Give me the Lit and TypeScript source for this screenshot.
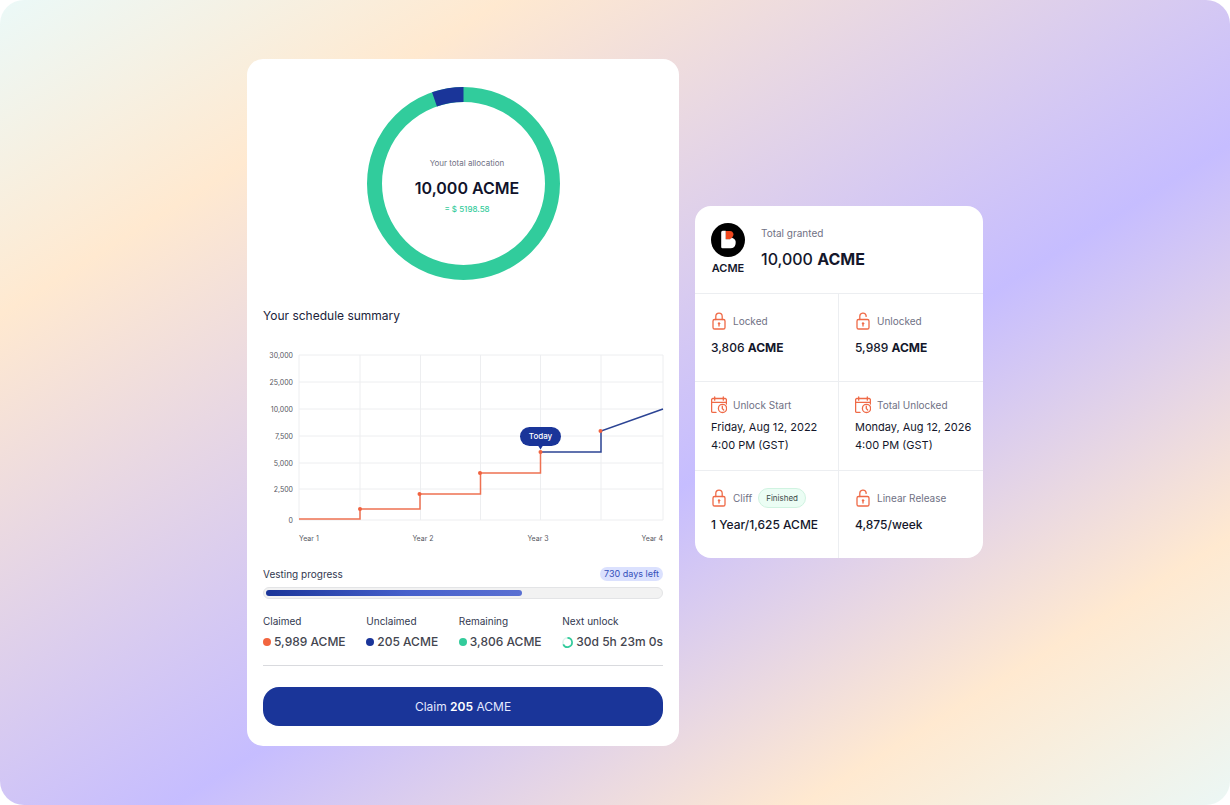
import { LitElement, html, svg, css } from "lit";
import { customElement, property } from "lit/decorators.js";

type Point = [number, number];

const lockBody = svg`<rect x="2" y="7.5" width="12" height="9.5" rx="1.6"/><circle cx="8" cy="11.4" r=".9" fill="currentColor" stroke-width=".5"/><path d="M8 11.5v2.600"/>`;

const icons: Record<string, unknown> = {
  locked: svg`${lockBody}<path d="M4.800 7.500V4.400a3.200 3.200 0 0 1 6.400 0v3.100"/>`,
  unlocked: svg`${lockBody}<path d="M4.800 7.500V4.400a3.200 3.200 0 0 1 6.300-.9v.9"/>`,
  calendar: svg`<path d="M5 16.400H1.800A1.200 1.200 0 0 1 .6 15.200V3.700a1.200 1.200 0 0 1 1.200-1.200h12.400a1.200 1.200 0 0 1 1.200 1.200v4.300M.6 6.300h14.800M3.700 1v3.200M12.300 1v3.200"/><circle cx="11.500" cy="12.400" r="4.100"/><path d="M11.300 10.200v2.400l1.400 1.400"/>`,
};

@customElement("line-icon")
class LineIcon extends LitElement {
  @property() name = "locked";

  static styles = css`
    :host { display: block; flex: none; color: #ef6a47; }
    .icon { display: block; width: 16px; height: 18px; }
  `;

  render() {
    return html`<svg class="icon" viewBox="0 0 16 18" fill="none" stroke="currentColor" stroke-width="1.3" stroke-linecap="round" stroke-linejoin="round" aria-hidden="true">${icons[this.name]}</svg>`;
  }
}

@customElement("allocation-ring")
class AllocationRing extends LitElement {
  @property({ type: Number }) share = 5.3;

  static styles = css`
    :host { display: grid; justify-items: center; align-items: center; }
    .ring, .text { grid-area: 1 / 1; }
    .ring { display: block; width: 193px; height: 193px; }
    .text { padding: 5px 0 0 8px; text-align: center; }
    .caption { margin: 0; font-size: 8px; line-height: 12px; color: #6f7184; }
    .total { margin: 8px 0 4px; font-size: 16px; line-height: 22px; font-weight: 600; color: #10132b; }
    .value { margin: 0; font-size: 8px; line-height: 12px; font-weight: 500; color: #33cb9b; }
  `;

  render() {
    return html`
      <svg class="ring" viewBox="0 0 193 193" fill="none" stroke-width="15" aria-hidden="true">
        <circle cx="96.5" cy="96.5" r="89" stroke="#31cc9c"/>
        <circle cx="96.5" cy="96.5" r="89" stroke="#1a3599" pathLength="100"
          stroke-dasharray="${this.share} ${100 - this.share}" stroke-dashoffset="${25 + this.share}"/>
      </svg>
      <div class="text">
        <p class="caption">Your total allocation</p>
        <p class="total">10,000 ACME</p>
        <p class="value">= $ 5198.58</p>
      </div>`;
  }
}

@customElement("schedule-chart")
class ScheduleChart extends LitElement {
  static styles = css`
    :host { display: block; }
    .chart { display: block; width: 100%; overflow: visible; }
    .grid { stroke: #edeef0; stroke-width: 1; }
    .label { font-size: 7px; fill: #55565e; }
    .end { text-anchor: end; }
    .middle { text-anchor: middle; }
    .past { stroke: #ee7152; stroke-width: 1.5; }
    .future { stroke: #2c4494; stroke-width: 1.5; }
    .dot { fill: #f0623f; }
    .flag { fill: #1a3599; }
    .flag-text { font-size: 8px; font-weight: 500; fill: #fff; text-anchor: middle; }
  `;

  private rows: [string, number][] = [
    ["30,000", 8], ["25,000", 35], ["10,000", 62], ["7,500", 89], ["5,000", 116], ["2,500", 142], ["0", 173],
  ];
  private columns = [36, 97, 157.5, 217.5, 277.5, 338, 400];
  private past: Point[] = [[36, 172], [97, 172], [97, 162], [157, 162], [157, 147], [217.5, 147], [217.5, 126], [277.5, 126], [277.5, 105]];
  private future: Point[] = [[277.5, 105], [338, 105], [338, 84], [400, 62]];
  private dots: Point[] = [[97, 162], [156.5, 147], [217, 126], [277.5, 105], [337.5, 84]];

  render() {
    return html`
      <svg class="chart" viewBox="0 0 400 197" fill="none" role="img" aria-label="Unlock schedule from year 1 to year 4">
        ${this.rows.map(([, y]) => svg`<path class="grid" d="M36 ${y}H400"/>`)}
        ${this.columns.map((x) => svg`<path class="grid" d="M${x} 8V173"/>`)}
        ${this.rows.map(([text, y]) => svg`<text class="label end" x="30" y=${y + 3}>${text}</text>`)}
        <text class="label" x="36" y="194">Year 1</text>
        <text class="label middle" x="160" y="194">Year 2</text>
        <text class="label middle" x="275" y="194">Year 3</text>
        <text class="label end" x="400" y="194">Year 4</text>
        <polyline class="future" points=${this.future.join(" ")}/>
        <polyline class="past" points=${this.past.join(" ")}/>
        ${this.dots.map(([x, y]) => svg`<circle class="dot" cx=${x} cy=${y} r="2"/>`)}
        <rect class="flag" x="257" y="80" width="41" height="19" rx="9.5"/>
        <path class="flag" d="M275 98.5h5l-2.5 4z"/>
        <text class="flag-text" x="277.5" y="92">Today</text>
      </svg>`;
  }
}

@customElement("vesting-card")
class VestingCard extends LitElement {
  @property({ type: Number }) progress = 65;

  static styles = css`
    :host { display: block; flex: 0 1 432px; min-width: 0; }
    .card { box-sizing: border-box; padding: 28px 16px 20px; border-radius: 16px; background: #fff; }
    .heading { margin: 26px 0 21px; font-size: 12px; line-height: 20px; font-weight: 400; color: #20233a; }
    .progress-head { display: flex; justify-content: space-between; align-items: center; margin-top: 23px; }
    .progress-title { font-size: 10px; line-height: 14px; color: #323850; }
    .days { padding: 0 4px; border-radius: 7px; background: #dbe1fe; font-size: 9px; line-height: 14px; color: #3450ba; }
    .bar { box-sizing: border-box; height: 12px; margin-top: 6px; padding: 2px; border: 1px solid #e3e4e6; border-radius: 6px; background: #f2f2f2; }
    .fill { height: 6px; border-radius: 3px; background: linear-gradient(90deg, #1a3599, #4660cb 55%, #5a70d2); }
    .stats { display: flex; justify-content: space-between; margin: 15px 0 0; }
    .stat-name { font-size: 10px; line-height: 14px; color: #323850; }
    .stat-value { display: flex; align-items: center; gap: 3px; margin: 6px 0 0; font-size: 12px; line-height: 16px; font-weight: 500; color: #43454f; white-space: nowrap; }
    .dot { width: 8px; height: 8px; border-radius: 50%; }
    .claimed { background: #f2653f; }
    .unclaimed { background: #1a3599; }
    .remaining { background: #33cb9b; }
    .spinner { width: 11px; height: 11px; }
    .divider { height: 1px; margin: 15px 0 21px; border: 0; background: #d9dade; }
    .claim { display: block; width: 100%; padding: 0; border: 0; border-radius: 16px; background: #1a3599; color: #e4e9ff; font: 400 12px/39px Inter, sans-serif; cursor: pointer; }
    .amount { font-weight: 600; color: #fff; }
  `;

  render() {
    return html`
      <section class="card">
        <allocation-ring></allocation-ring>
        <h2 class="heading">Your schedule summary</h2>
        <schedule-chart></schedule-chart>
        <div class="progress-head">
          <span class="progress-title" id="vesting">Vesting progress</span>
          <span class="days">730 days left</span>
        </div>
        <div class="bar" role="progressbar" aria-labelledby="vesting" aria-valuenow=${this.progress}>
          <div class="fill" style="width:${this.progress}%"></div>
        </div>
        <dl class="stats">
          <div><dt class="stat-name">Claimed</dt><dd class="stat-value"><i class="dot claimed"></i>5,989 ACME</dd></div>
          <div><dt class="stat-name">Unclaimed</dt><dd class="stat-value"><i class="dot unclaimed"></i>205 ACME</dd></div>
          <div><dt class="stat-name">Remaining</dt><dd class="stat-value"><i class="dot remaining"></i>3,806 ACME</dd></div>
          <div><dt class="stat-name">Next unlock</dt><dd class="stat-value">
            <svg class="spinner" viewBox="0 0 12 12" fill="none" stroke-width="1.8" aria-hidden="true">
              <circle cx="6" cy="6" r="5" stroke="#dff5ee"/>
              <path d="M6 1A5 5 0 1 1 1.400 8" stroke="#33cb9b"/>
            </svg>30d 5h 23m 0s</dd></div>
        </dl>
        <hr class="divider">
        <button class="claim" type="button">Claim <span class="amount">205</span> ACME</button>
      </section>`;
  }
}

@customElement("grant-card")
class GrantCard extends LitElement {
  static styles = css`
    :host { display: block; flex: 0 1 288px; margin-bottom: 42px; min-width: 0; }
    .card { border-radius: 16px; background: #fff; color: #14172b; }
    .header { display: flex; gap: 16px; padding: 17px 16px 18px; border-bottom: 1px solid #eceef1; }
    .brand { display: flex; flex-direction: column; align-items: center; gap: 4px; font-size: 11px; line-height: 14px; font-weight: 600; }
    .logo { display: block; width: 34px; height: 34px; }
    .granted { padding-top: 3px; }
    .name { font-size: 10px; line-height: 14px; color: #6f7184; }
    .total { margin: 8px 0 0; font-size: 16px; line-height: 22px; font-weight: 500; }
    .facts { display: grid; grid-template-columns: 1fr 1fr; margin: 0; }
    .cell { padding: 17px 0 24px 16px; border-bottom: 1px solid #eceef1; }
    .cell:nth-child(odd) { border-right: 1px solid #eceef1; }
    .cell:nth-last-child(-n + 2) { border-bottom: 0; }
    .cell.dates { padding: 13px 0 16px 16px; }
    .label { display: flex; align-items: center; gap: 6px; height: 20px; }
    .value { margin: 8px 0 0; font-size: 12px; line-height: 18px; font-weight: 500; white-space: nowrap; }
    .dates .value { margin-top: 3px; font-size: 11px; font-weight: 400; }
    .unit { font-weight: 700; }
    .badge { box-sizing: border-box; height: 20px; padding: 0 7px; border: 1px solid #d0f3e1; border-radius: 10px; background: #ebfdf4; font-size: 8px; line-height: 18px; color: #3c4a48; }
  `;

  render() {
    return html`
      <section class="card">
        <header class="header">
          <div class="brand">
            <svg class="logo" viewBox="0 0 34 34" aria-hidden="true">
              <circle cx="17" cy="17" r="17" fill="#000"/>
              <path d="M14.500 8h4.500a3.500 3.500 0 0 1 2.500 6L19.500 16.500h-5z" fill="#f0481f"/>
              <path d="M10.200 9.300a1.500 1.500 0 0 1 1.500-1.500h3v8.500h4.300l2-1.600a5.400 5.400 0 0 1-2.200 10.500h-7.300a1.300 1.300 0 0 1-1.300-1.300z" fill="#fff"/>
            </svg>
            <span>ACME</span>
          </div>
          <div class="granted">
            <div class="name">Total granted</div>
            <p class="total">10,000 <span class="unit">ACME</span></p>
          </div>
        </header>
        <dl class="facts">
          <div class="cell">
            <dt class="label"><line-icon name="locked"></line-icon><span class="name">Locked</span></dt>
            <dd class="value">3,806 <span class="unit">ACME</span></dd>
          </div>
          <div class="cell">
            <dt class="label"><line-icon name="unlocked"></line-icon><span class="name">Unlocked</span></dt>
            <dd class="value">5,989 <span class="unit">ACME</span></dd>
          </div>
          <div class="cell dates">
            <dt class="label"><line-icon name="calendar"></line-icon><span class="name">Unlock Start</span></dt>
            <dd class="value">Friday, Aug 12, 2022<br>4:00 PM (GST)</dd>
          </div>
          <div class="cell dates">
            <dt class="label"><line-icon name="calendar"></line-icon><span class="name">Total Unlocked</span></dt>
            <dd class="value">Monday, Aug 12, 2026<br>4:00 PM (GST)</dd>
          </div>
          <div class="cell">
            <dt class="label"><line-icon name="locked"></line-icon><span class="name">Cliff</span><span class="badge">Finished</span></dt>
            <dd class="value">1 Year/1,625 ACME</dd>
          </div>
          <div class="cell">
            <dt class="label"><line-icon name="unlocked"></line-icon><span class="name">Linear Release</span></dt>
            <dd class="value">4,875/week</dd>
          </div>
        </dl>
      </section>`;
  }
}

@customElement("app-root")
class AppRoot extends LitElement {
  static styles = css`
    :host { display: block; background: #fff; font-family: Inter, sans-serif; }
    .stage {
      box-sizing: border-box;
      display: flex;
      justify-content: center;
      align-items: center;
      gap: 16px;
      min-height: 100vh;
      border-radius: 24px;
      background: linear-gradient(148deg, #ebf9f8 0%, #ffe9d0 20%, #c6bdff 58%, #ffe9d0 83%, #ebf7f5 100%);
    }
  `;

  render() {
    return html`<main class="stage"><vesting-card></vesting-card><grant-card></grant-card></main>`;
  }
}
